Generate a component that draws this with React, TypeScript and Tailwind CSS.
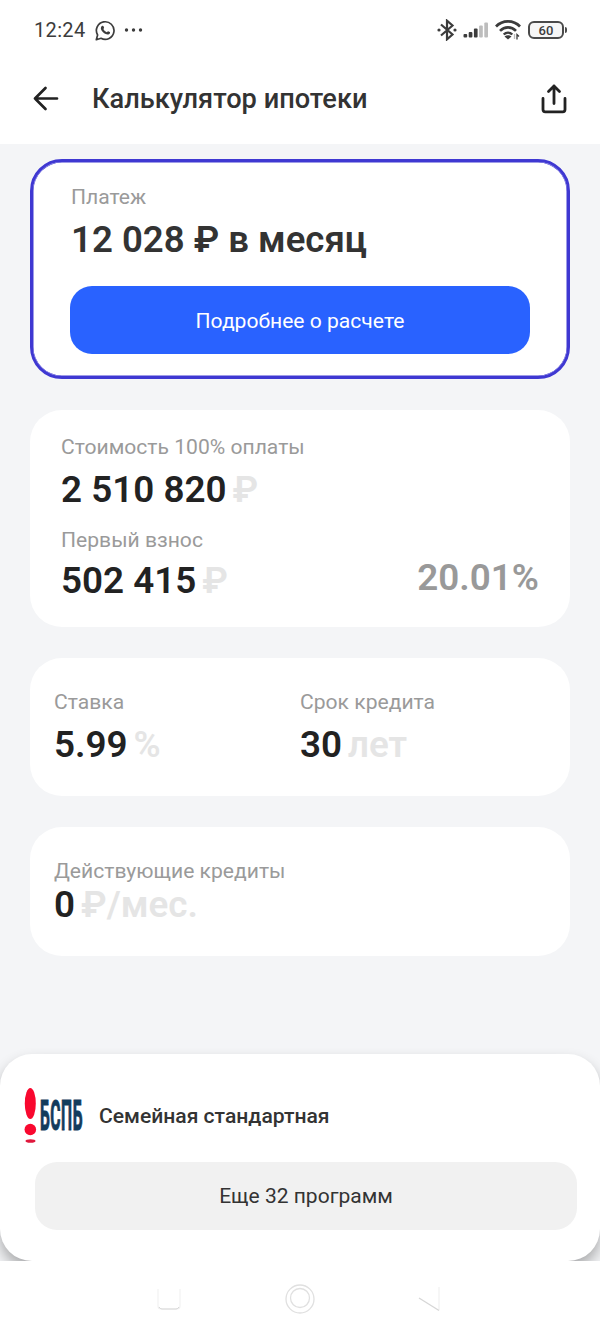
import type { ReactNode } from 'react';

function StatusBar() {
  return (
    <div className="flex h-[60px] items-center justify-between pr-[33px] pl-[34px] text-[#3c3c3c]">
      <div className="flex items-center">
        <span className="w-[52px] text-[20px] leading-6 tracking-[0.35px] whitespace-nowrap">12:24</span>
        <svg className="ml-[9px]" width="21" height="21" viewBox="0 0 21 21" fill="none">
          <path d="M1.3 19.7 2.6 15A8.8 8.8 0 1 1 6 18.3Z" stroke="currentColor" strokeWidth="1.7" strokeLinejoin="round" />
          <path
            d="M7.4 5.8c.5-.2.9 0 1.1.5l.6 1.5c.1.4-.6 1-.7 1.3.7 1.5 1.8 2.5 3.3 3.1.4-.1 1-1.1 1.4-1l1.7.9c.4.2.3.9 0 1.4-.8 1.3-2.6 1.3-4.1.6-2.2-1-4-2.8-4.7-4.8-.4-1.3 0-2.9 1.4-3.5Z"
            fill="currentColor"
          />
        </svg>
        <svg className="ml-2" width="20" height="4" viewBox="0 0 20 4" fill="currentColor">
          <circle cx="2.5" cy="2" r="1.7" />
          <circle cx="9.5" cy="2" r="1.7" />
          <circle cx="16.5" cy="2" r="1.7" />
        </svg>
      </div>
      <div className="flex items-center">
        <svg width="20" height="22" viewBox="0 0 20 22" fill="none">
          <path d="m4 5.500 11.500 10-5.500 4.800V1.700l5.500 4.800L4 16.500" stroke="currentColor" strokeWidth="2.2" />
          <circle cx="2" cy="11" r="1.6" fill="currentColor" />
          <circle cx="18" cy="11" r="1.6" fill="currentColor" />
        </svg>
        <svg className="ml-[6px]" width="26" height="18" viewBox="0 0 26 17" fill="currentColor">
          <rect x="0.5" y="12.5" width="3.7" height="3.5" rx="1" />
          <rect x="5.7" y="10.5" width="3.7" height="5.5" rx="1" />
          <rect x="10.9" y="7" width="3.7" height="9" rx="1" />
          <rect x="16.1" y="4" width="3.7" height="12" rx="1" fill="#bdbdbd" />
          <rect x="21.3" y="1" width="3.7" height="15" rx="1" fill="#bdbdbd" />
        </svg>
        <svg className="ml-[6px]" width="28" height="20" viewBox="0 0 28 20" fill="none">
          <path d="M1 6.500C7.500-.3 18.500-.3 25 6.500" stroke="currentColor" strokeWidth="2.7" />
          <path d="M5 10.900c4.600-4.700 11.400-4.700 16 0" stroke="currentColor" strokeWidth="2.7" />
          <path d="M8.700 14.500c2.500-2.400 6.100-2.400 8.600 0" stroke="currentColor" strokeWidth="2.4" />
          <path d="m13 19.500-3.500-3c2-1.700 5-1.700 7 0Z" fill="currentColor" />
          <path d="M19.500 14v5" stroke="#bdbdbd" strokeWidth="1.3" />
          <path d="M22 19.500v-5l2 2" stroke="currentColor" strokeWidth="1.3" />
        </svg>
        <div className="ml-[5px] flex items-center">
          <div className="flex h-[18px] w-[36px] items-center justify-center rounded-[6px] border-2 border-[#4a4a4a] bg-[#f6f6f6] text-[13px] leading-none font-medium">
            60
          </div>
          <div className="ml-px h-[6px] w-[2px] rounded-r bg-[#4a4a4a]" />
        </div>
      </div>
    </div>
  );
}

function Label({ children }: { children: ReactNode }) {
  return <div className="text-[21.1px] leading-[26px] whitespace-nowrap text-[#9a9a9a]">{children}</div>;
}

function Value({ value, unit }: { value: string; unit: string }) {
  return (
    <div className="flex gap-[6px] text-[36.8px] leading-10 font-semibold whitespace-nowrap">
      <span className="text-[#222]">{value}</span>
      <span className="text-[#e5e5e5]">{unit}</span>
    </div>
  );
}

function BankLogo() {
  return (
    <div className="flex h-14 w-[60px] items-start">
      <svg width="15" height="56" viewBox="0 0 15 56">
        <ellipse cx="6.3" cy="15.5" rx="5.5" ry="15.5" fill="#f9082f" />
        <circle cx="6.3" cy="41.5" r="5.8" fill="#f9082f" />
        <ellipse cx="6.5" cy="53" rx="5" ry="1.8" fill="#e0183c" />
      </svg>
      <span className="mt-[4px] ml-px w-[43px] origin-left scale-x-[0.363] text-[43px] leading-[46px] font-bold tracking-[1.5px] whitespace-nowrap text-[#143c5c] [-webkit-text-stroke:1.2px_#143c5c]">
        БСПБ
      </span>
    </div>
  );
}

export default function App() {
  return (
    <div className="flex h-[1332px] w-[600px] flex-col overflow-hidden bg-white font-['Roboto',sans-serif]">
      <StatusBar />
      <header className="flex h-[84px] items-center pr-8 pb-[7px] pl-8">
        <svg width="28" height="26" viewBox="0 0 28 26" fill="none" stroke="#222" strokeWidth="2.7" strokeLinecap="round" strokeLinejoin="round">
          <path d="M25 12.500H3M13.500 2 3 12.500 13.500 23" />
        </svg>
        <h1 className="ml-8 flex-1 text-[27.2px] leading-8 font-medium whitespace-nowrap text-[#333]">Калькулятор ипотеки</h1>
        <svg width="28" height="30" viewBox="0 0 28 30" fill="none" stroke="#222" strokeWidth="2.8" strokeLinecap="round" strokeLinejoin="round">
          <path d="M14 19.500V2M8.500 7.500 14 2l5.500 5.500" />
          <path d="M3 14.500v11c0 1.500 1 2.300 2.300 2.300h17.400c1.300 0 2.300-.8 2.300-2.300v-11" />
        </svg>
      </header>

      <main className="flex h-[1117px] flex-col bg-[#f4f5f7] pt-[15px]">
        <section className="mx-[30px] h-[220px] rounded-[32px] border-[3px] border-[#3f38d2] bg-white px-[37px] pt-[22px] shadow-[inset_0_0_0_0.5px_#3f38d2]">
          <div className="pl-px">
            <Label>Платеж</Label>
          </div>
          <div className="mt-[10px] pl-px text-[36.6px] leading-10 font-semibold whitespace-nowrap text-[#333]">12 028 ₽ в месяц</div>
          <button className="mt-[26px] h-[68px] w-full rounded-[22px] bg-[#2962ff] pt-px text-[21.1px] text-white">
            Подробнее о расчете
          </button>
        </section>

        <section className="mx-[30px] mt-[31px] flex h-[217px] items-start justify-between rounded-[32px] bg-white px-[31px] pt-6">
          <div>
            <Label>Стоимость 100% оплаты</Label>
            <div className="mt-[10px]">
              <Value value="2 510 820" unit="₽" />
            </div>
            <div className="mt-[17px]">
              <Label>Первый взнос</Label>
            </div>
            <div className="mt-[8px]">
              <Value value="502 415" unit="₽" />
            </div>
          </div>
          <div className="mt-[124px] text-[36.8px] leading-10 font-semibold text-[#999]">20.01%</div>
        </section>

        <section className="mx-[30px] mt-[31px] grid h-[138px] grid-cols-[246px_1fr] rounded-[32px] bg-white pt-[31px] pl-6">
          <div>
            <Label>Ставка</Label>
            <div className="mt-[10px]">
              <Value value="5.99" unit="%" />
            </div>
          </div>
          <div>
            <Label>Срок кредита</Label>
            <div className="mt-[10px]">
              <Value value="30" unit="лет" />
            </div>
          </div>
        </section>

        <section className="mx-[30px] mt-[31px] h-[129px] rounded-[32px] bg-white pt-[31px] pl-6">
          <Label>Действующие кредиты</Label>
          <div className="mt-px">
            <Value value="0" unit="₽/мес." />
          </div>
        </section>

        {/* bottom sheet with the picked program */}
        <section className="mt-auto h-[207px] rounded-[32px] bg-white pt-[34px] shadow-[0_8px_14px_rgba(0,0,0,0.3)]">
          <div className="flex h-14 items-center pl-6">
            <BankLogo />
            <span className="ml-[15px] text-[21.1px] leading-7 font-medium whitespace-nowrap text-[#333]">
              Семейная стандартная
            </span>
          </div>
          <button className="mt-[18px] ml-[35px] h-[68px] w-[542px] rounded-[22px] bg-[#f1f1f1] pt-px text-[21px] text-[#333]">
            Еще 32 программ
          </button>
        </section>
      </main>

      <nav className="flex h-[71px] justify-between bg-white pt-[20px] pr-[159px] pl-[155px]">
        <svg width="28" height="34" viewBox="0 0 28 34" fill="none">
          <path d="M3 8v17q0 3 3 3h16q3 0 3-3V8" stroke="#f2f2f2" strokeWidth="1.2" />
          <path d="M4 26q1 2 3 2h14q2 0 3-2" stroke="#d6d6d6" strokeWidth="1" />
        </svg>
        <svg width="32" height="34" viewBox="0 0 32 34" fill="none" stroke="#e0e0e0" strokeWidth="1.3">
          <circle cx="16" cy="18" r="14" />
          <circle cx="16" cy="17" r="9.5" />
        </svg>
        <svg width="24" height="34" viewBox="0 0 24 34" fill="none">
          <path d="M22 6v23" stroke="#f0f0f0" strokeWidth="1.2" />
          <path d="m2 17 20 12.500" stroke="#d6d6d6" strokeWidth="1.3" />
        </svg>
      </nav>
    </div>
  );
}
